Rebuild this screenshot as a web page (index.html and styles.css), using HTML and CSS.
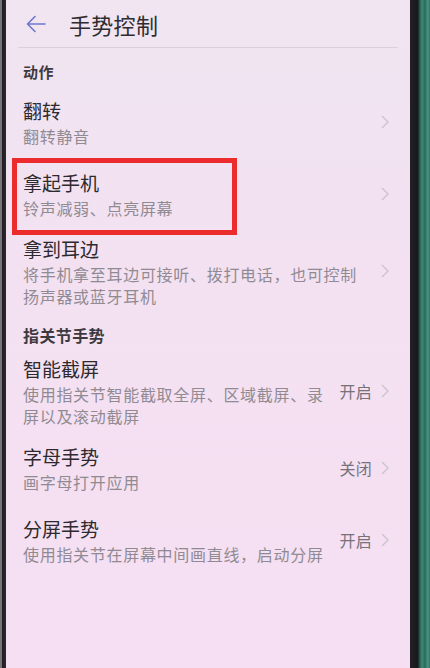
FILE: index.html
```html
<!DOCTYPE html>
<html lang="zh-CN">
<head>
  <meta charset="UTF-8">
  <meta name="viewport" content="width=device-width, initial-scale=1.0">
  <title>手势控制</title>
  <link rel="stylesheet" href="styles.css">
</head>
<body>
  <div class="device">
    <div class="bezel-left"></div>

    <div class="screen">
      <header class="topbar">
        <svg class="back" width="22" height="20" viewBox="0 0 22 20">
          <path d="M20 10H2.5M10 2.5L2.5 10L10 17.5" fill="none" stroke="#6f77cc" stroke-width="1.6" stroke-linecap="round" stroke-linejoin="round"/>
        </svg>
        <h1>手势控制</h1>
      </header>

      <div class="section-title first">动作</div>

      <div class="row">
        <div class="text">
          <div class="title">翻转</div>
          <div class="sub">翻转静音</div>
        </div>
        <svg class="chev" width="10" height="16" viewBox="0 0 10 16"><path d="M2 2L8 8L2 14"/></svg>
      </div>

      <div class="row picked">
        <div class="text">
          <div class="title">拿起手机</div>
          <div class="sub">铃声减弱、点亮屏幕</div>
        </div>
        <svg class="chev" width="10" height="16" viewBox="0 0 10 16"><path d="M2 2L8 8L2 14"/></svg>
        <div class="mark"></div>
      </div>

      <div class="row tall">
        <div class="text">
          <div class="title">拿到耳边</div>
          <div class="sub">将手机拿至耳边可接听、拨打电话，也可控制扬声器或蓝牙耳机</div>
        </div>
        <svg class="chev" width="10" height="16" viewBox="0 0 10 16"><path d="M2 2L8 8L2 14"/></svg>
      </div>

      <div class="section-title">指关节手势</div>

      <div class="row tall">
        <div class="text">
          <div class="title">智能截屏</div>
          <div class="sub">使用指关节智能截取全屏、区域截屏、录屏以及滚动截屏</div>
        </div>
        <span class="state">开启</span>
        <svg class="chev" width="10" height="16" viewBox="0 0 10 16"><path d="M2 2L8 8L2 14"/></svg>
      </div>

      <div class="row">
        <div class="text">
          <div class="title">字母手势</div>
          <div class="sub">画字母打开应用</div>
        </div>
        <span class="state">关闭</span>
        <svg class="chev" width="10" height="16" viewBox="0 0 10 16"><path d="M2 2L8 8L2 14"/></svg>
      </div>

      <div class="row">
        <div class="text">
          <div class="title">分屏手势</div>
          <div class="sub">使用指关节在屏幕中间画直线，启动分屏</div>
        </div>
        <span class="state">开启</span>
        <svg class="chev" width="10" height="16" viewBox="0 0 10 16"><path d="M2 2L8 8L2 14"/></svg>
      </div>
    </div>

    <div class="bezel-right"></div>
  </div>
</body>
</html>
```

FILE: styles.css
```css
body {
  margin: 0;
  padding: 0;
  font-family: "Noto Sans CJK SC", "Noto Sans", sans-serif;
  background: #1d2222;
}
.device {
  display: flex;
  height: 668px;
  overflow: hidden;
}
.bezel-left {
  width: 6px;
  background: linear-gradient(to right, #77737a 0, #77737a 2px, #1f1d22 2px, #2b2830 6px);
}
.bezel-right {
  width: 20px;
  background: linear-gradient(to right, #241f28 0, #16191b 8px, #1e4a40 9px, #3d8b79 12px, #2b6a5b 15px, #4a9985 18px, #2f6d5f 20px);
}
.screen {
  flex: 1;
  background: linear-gradient(to bottom, #f0e5f1, #f3e1f1 40%, #f6dff3);
}

/* top bar */
.topbar {
  display: flex;
  align-items: center;
  height: 47px;
  margin: 0 12px;
  border-bottom: 1px solid #dccfdb;
}
.back {
  margin-left: 7px;
  margin-top: 1px;
}
.topbar h1 {
  margin: 0 0 0 22px;
  font-size: 22px;
  font-weight: 400;
  letter-spacing: 0.3px;
  color: #2f2c30;
}

/* group headings */
.section-title {
  padding: 12px 17px 4px;
  line-height: 22px;
  font-size: 16px;
  font-weight: 700;
  letter-spacing: 0.4px;
  color: #3d3a3e;
}
.section-title.first {
  font-size: 15px;
  padding-top: 13px;
  padding-bottom: 3px;
}

/* list rows */
.row {
  position: relative;
  display: flex;
  align-items: center;
  min-height: 72px;
  padding: 0 20px 0 17px;
  box-sizing: border-box;
}
.row.tall {
  padding-top: 5px;
  padding-bottom: 5px;
}
.text {
  flex: 1;
}
.title {
  font-size: 19px;
  line-height: 28px;
  color: #2d2a2e;
}
.sub {
  font-size: 16px;
  line-height: 22px;
  letter-spacing: 0.7px;
  color: #908b93;
}
.state {
  margin-left: 10px;
  font-size: 16px;
  letter-spacing: 0.3px;
  color: #77727a;
}
.chev {
  margin-left: 8px;
  flex-shrink: 0;
}
.chev path {
  fill: none;
  stroke: #cdc3cd;
  stroke-width: 1.4;
}

/* red highlight around the picked item */
.mark {
  position: absolute;
  left: 6px;
  top: 0;
  width: 225px;
  height: 77px;
  border: 5px solid #ec2b2d;
  box-sizing: border-box;
}
```
